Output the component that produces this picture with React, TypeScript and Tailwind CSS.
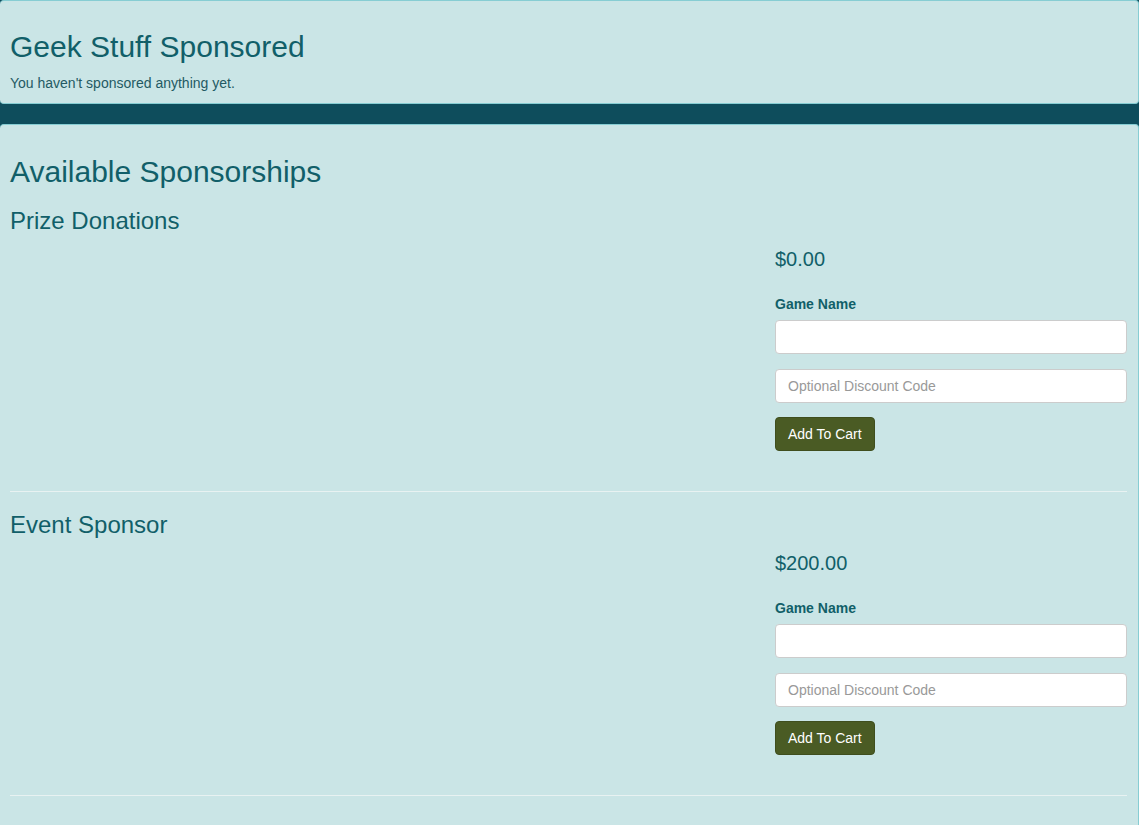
import React from 'react';

const sponsorships = [
  { title: "Prize Donations", price: "$0.00" },
  { title: "Event Sponsor", price: "$200.00" },
];

const App = () => {
  return (
    <div className="min-h-[825px] bg-[#0e4d5c] font-['Liberation_Sans',Arial,sans-serif] text-[#115f69]">
      <div className="bg-[#cae5e6] border border-l-0 border-[#86cdd3] rounded-[4px] pl-[10px] pr-[11px] pt-[9px] pb-[10px]">
        <h2 className="text-[30px] leading-[33px] mt-[20px] mb-[10px]">Geek Stuff Sponsored</h2>
        <p className="text-[14px] leading-[20px] text-[#235a63]">You haven't sponsored anything yet.</p>
      </div>

      <div className="h-[20px]"></div>

      <div className="bg-[#cae5e6] border border-l-0 border-[#86cdd3] rounded-[4px] pl-[10px] pr-[11px] pt-[10px] pb-[40px]">
        <h2 className="text-[30px] leading-[33px] mt-[20px]">Available Sponsorships</h2>

        {sponsorships.map((item, index) => (
          <div key={index}>
            <h3 className="text-[24px] leading-[26px] mt-[20px]">{item.title}</h3>
            <div className="flex">
              <div className="flex-1"></div>
              <div className="w-[352px]">
                <div className="text-[20px] leading-[22px] mt-[14px]">{item.price}</div>
                <label className="block text-[14px] leading-[20px] font-bold mt-[24px] mb-[6px]">Game Name</label>
                <input
                  type="text"
                  className="block w-full h-[34px] bg-white border border-[#cccccc] rounded-[4px] px-3 text-[14px] text-[#555]"
                />
                <input
                  type="text"
                  placeholder="Optional Discount Code"
                  className="block w-full h-[34px] mt-[15px] bg-white border border-[#cccccc] rounded-[4px] px-3 text-[14px] text-[#555] placeholder:text-[#999]"
                />
                <button className="mt-[14px] h-[34px] px-3 bg-[#4a5b24] border border-[#3f4e1e] rounded-[4px] text-white text-[14px]">
                  Add To Cart
                </button>
              </div>
            </div>
            <hr className="mt-[40px] border-0 border-t border-[#e8f2f2]" />
          </div>
        ))}
      </div>
    </div>
  );
};

export default App;
